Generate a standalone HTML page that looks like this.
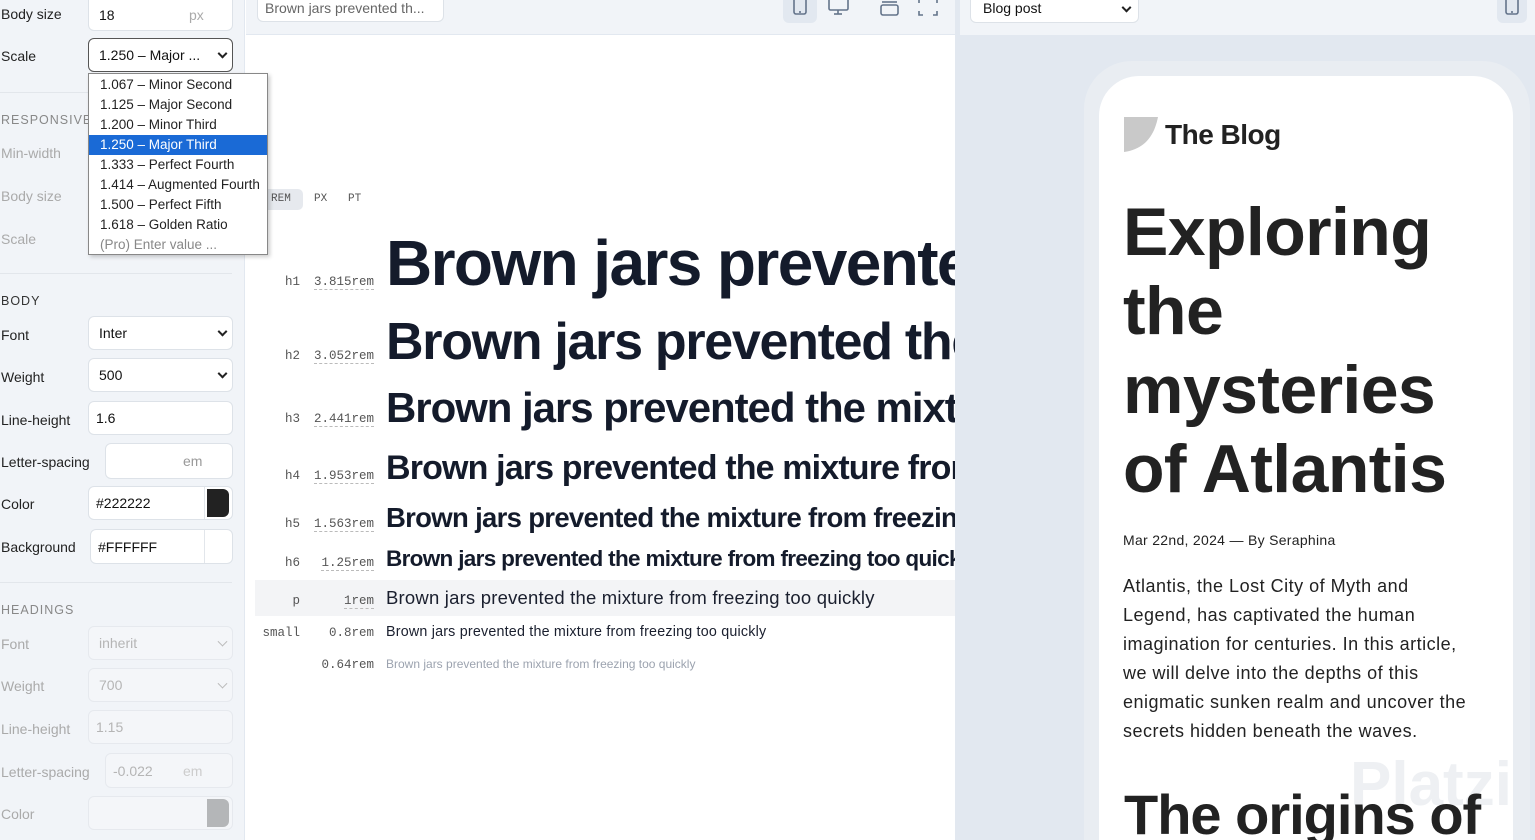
<!DOCTYPE html>
<html style="overflow:hidden;width:1535px;height:840px"><head><meta charset="utf-8"><style>
*{box-sizing:border-box;margin:0;padding:0}
body{width:1535px;height:840px;overflow:hidden;position:relative;font-family:"Liberation Sans",sans-serif;background:#fff;color:#1f2937}
.abs{position:absolute}
#side{left:0;top:0;width:245px;height:840px;background:#f1f4f8;border-right:1px solid #e2e8f0}
.lbl{position:absolute;left:1px;font-size:14px;color:#222}
.dim{color:#aaa}
.inp{position:absolute;background:#fff;border:1px solid #dde2e8;border-radius:6px;font-size:14px;padding-left:10px;display:flex;align-items:center;color:#111}
.inp.dis{background:#f4f6f9;color:#b5b5b5;border-color:#e6e9ee}
.chev{position:absolute;right:6px;top:50%;width:7px;height:7px;border-right:2px solid #222;border-bottom:2px solid #222;transform:translateY(-70%) rotate(45deg)}
.dis .chev{border-color:#bbb;border-width:1px}
.sec{position:absolute;left:1px;font-size:12.5px;letter-spacing:1px;color:#333}
.hr{position:absolute;left:0;width:232px;height:1px;background:#e2e6eb}
.mono{font-family:"Liberation Mono",monospace;font-size:12.5px;color:#555}
.row{position:absolute;left:255px;width:700px;display:flex;align-items:baseline;white-space:nowrap;overflow:hidden}
.tag{width:45px;text-align:right;flex-shrink:0}
.val{width:74px;text-align:right;margin-right:12px;flex-shrink:0}
.val span{border-bottom:1px dashed #bbb}
.s{font-weight:bold;color:#141b2b;letter-spacing:-0.025em}
</style></head><body>
<div id="side" class="abs">
 <div class="lbl" style="top:6px">Body size</div>
 <div class="inp" style="left:88px;top:0;width:145px;height:31px;border-top:none;border-radius:0 0 6px 6px">18<span style="position:absolute;left:100px;color:#aaa">px</span></div>
 <div class="lbl" style="top:48px">Scale</div>
 <div class="inp" style="left:88px;top:38px;width:145px;height:34px;border-color:#555">1.250 – Major ...<div class="chev"></div></div>
 <div class="hr" style="top:92px"></div>
 <div class="sec dim" style="top:113px;color:#888">RESPONSIVE</div>
 <div class="lbl dim" style="top:145px">Min-width</div>
 <div class="lbl dim" style="top:188px">Body size</div>
 <div class="lbl dim" style="top:231px">Scale</div>
 <div class="hr" style="top:273px"></div>
 <div class="sec" style="top:294px">BODY</div>
 <div class="lbl" style="top:327px">Font</div>
 <div class="inp" style="left:88px;top:316px;width:145px;height:34px">Inter<div class="chev"></div></div>
 <div class="lbl" style="top:369px">Weight</div>
 <div class="inp" style="left:88px;top:358px;width:145px;height:34px">500<div class="chev"></div></div>
 <div class="lbl" style="top:412px">Line-height</div>
 <div class="inp" style="left:88px;top:401px;width:145px;height:34px;padding-left:7px">1.6</div>
 <div class="lbl" style="top:454px">Letter-spacing</div>
 <div class="inp" style="left:105px;top:443px;width:128px;height:36px"><span style="position:absolute;left:77px;color:#999">em</span></div>
 <div class="lbl" style="top:496px">Color</div>
 <div class="inp" style="left:88px;top:486px;width:145px;height:34px;padding-left:7px">#222222<div style="position:absolute;left:115px;top:0;width:1px;height:32px;background:#e2e6eb"></div><div style="position:absolute;left:118px;top:2px;width:22px;height:28px;background:#222;border-radius:0 6px 6px 0"></div></div>
 <div class="lbl" style="top:539px">Background</div>
 <div class="inp" style="left:90px;top:529px;width:143px;height:35px;padding-left:7px">#FFFFFF<div style="position:absolute;left:113px;top:0;width:1px;height:33px;background:#e2e6eb"></div></div>
 <div class="hr" style="top:582px"></div>
 <div class="sec" style="top:603px;color:#888">HEADINGS</div>
 <div class="lbl dim" style="top:636px">Font</div>
 <div class="inp dis" style="left:88px;top:626px;width:145px;height:34px">inherit<div class="chev"></div></div>
 <div class="lbl dim" style="top:678px">Weight</div>
 <div class="inp dis" style="left:88px;top:668px;width:145px;height:34px">700<div class="chev"></div></div>
 <div class="lbl dim" style="top:721px">Line-height</div>
 <div class="inp dis" style="left:88px;top:710px;width:145px;height:34px;padding-left:7px">1.15</div>
 <div class="lbl dim" style="top:764px">Letter-spacing</div>
 <div class="inp dis" style="left:105px;top:753px;width:128px;height:35px;padding-left:7px">-0.022<span style="position:absolute;left:77px;color:#ccc">em</span></div>
 <div class="lbl dim" style="top:806px">Color</div>
 <div class="inp dis" style="left:88px;top:796px;width:145px;height:34px"><div style="position:absolute;left:118px;top:2px;width:22px;height:28px;background:#b4b6b8;border-radius:0 6px 6px 0"></div></div>
</div>
<!-- dropdown -->
<div class="abs" style="left:88px;top:73px;width:180px;height:182px;background:#fff;border:1px solid #888;box-shadow:2px 2px 4px rgba(0,0,0,.2);font-size:13.5px;color:#222;z-index:5">
 <div style="padding:1px 0 0 11px;line-height:20px">1.067 – Minor Second<br>1.125 – Major Second<br>1.200 – Minor Third</div>
 <div style="background:#1a6ad6;color:#fff;padding-left:11px;line-height:20px">1.250 – Major Third</div>
 <div style="padding-left:11px;line-height:20px">1.333 – Perfect Fourth<br>1.414 – Augmented Fourth<br>1.500 – Perfect Fifth<br>1.618 – Golden Ratio<br><span style="color:#888">(Pro) Enter value ...</span></div>
</div>
<!-- middle toolbar -->
<div class="abs" style="left:246px;top:0;width:709px;height:35px;background:#f1f4f8;border-bottom:1px solid #e2e8f0"></div>
<div class="abs" style="left:257px;top:-6px;width:187px;height:28px;background:#fff;border:1px solid #dde2e8;border-radius:6px;font-size:14px;color:#666;padding:5px 0 0 7px">Brown jars prevented th...</div>
<div class="abs" style="left:783px;top:0;width:34px;height:23px;background:#e2e8f0;border-radius:0 0 6px 6px"></div>
<svg class="abs" style="left:780px;top:0" width="170" height="20" fill="none" stroke="#64748b" stroke-width="1.6">
 <rect x="14" y="-4" width="12" height="18" rx="2"/><line x1="19" y1="12" x2="21" y2="12"/>
 <rect x="49" y="-4" width="19" height="14" rx="1.5"/><line x1="58" y1="10" x2="58" y2="14"/><line x1="54" y1="14" x2="62" y2="14"/>
 <rect x="101" y="5" width="17" height="10" rx="2"/><line x1="102" y1="2" x2="117" y2="2"/>
 <path d="M139 0v3M139 11v4h4M157 11v4h-4M157 0v3"/>
</svg>
<div class="abs" style="left:955px;top:0;width:5px;height:840px;background:#e2e8f0"></div>
<!-- unit tabs -->
<div class="abs mono" style="left:266px;top:189px;width:37px;height:21px;background:#e6e9ee;border-radius:0 5px 5px 0;font-size:11px;padding:4px 0 0 5px">REM</div>
<div class="abs mono" style="left:314px;top:193px;font-size:11px">PX</div>
<div class="abs mono" style="left:348px;top:193px;font-size:11px">PT</div>
<!-- rows -->
<div class="row" style="top:226px"><span class="mono tag">h1</span><span class="mono val"><span>3.815rem</span></span><span class="s" style="font-size:64px">Brown jars prevented the mixture</span></div>
<div class="row" style="top:312px"><span class="mono tag">h2</span><span class="mono val"><span>3.052rem</span></span><span class="s" style="font-size:52px">Brown jars prevented the mixture</span></div>
<div class="row" style="top:384px"><span class="mono tag">h3</span><span class="mono val"><span>2.441rem</span></span><span class="s" style="font-size:42px">Brown jars prevented the mixture</span></div>
<div class="row" style="top:449px"><span class="mono tag">h4</span><span class="mono val"><span>1.953rem</span></span><span class="s" style="font-size:34px">Brown jars prevented the mixture from</span></div>
<div class="row" style="top:502px"><span class="mono tag">h5</span><span class="mono val"><span>1.563rem</span></span><span class="s" style="font-size:27.5px">Brown jars prevented the mixture from freezing</span></div>
<div class="row" style="top:546px"><span class="mono tag">h6</span><span class="mono val"><span>1.25rem</span></span><span class="s" style="font-size:22.5px;letter-spacing:-0.03em">Brown jars prevented the mixture from freezing too quickly</span></div>
<div class="abs" style="left:255px;top:580px;width:700px;height:36px;background:#f3f4f6"></div>
<div class="row" style="top:587px"><span class="mono tag">p</span><span class="mono val"><span>1rem</span></span><span style="font-size:18.5px;color:#1a1f2e;letter-spacing:0.2px">Brown jars prevented the mixture from freezing too quickly</span></div>
<div class="row" style="top:624px"><span class="mono tag">small</span><span class="mono val"><span>0.8rem</span></span><span style="font-size:14.3px;color:#1a1f2e;letter-spacing:0.2px">Brown jars prevented the mixture from freezing too quickly</span></div>
<div class="row" style="top:657px"><span class="mono tag"></span><span class="mono val"><span>0.64rem</span></span><span style="font-size:12px;color:#9ca3af">Brown jars prevented the mixture from freezing too quickly</span></div>
<!-- right panel -->
<div class="abs" style="left:960px;top:0;width:575px;height:840px;background:#e2e8f0;overflow:hidden">
 <div class="abs" style="left:0;top:0;width:575px;height:35px;background:#f1f4f8"></div>
 <div class="abs" style="left:10px;top:-6px;width:169px;height:29px;background:#fff;border:1px solid #dde2e8;border-radius:6px;font-size:14px;color:#111;padding:5px 0 0 12px">Blog post<div class="chev" style="right:8px"></div></div>
 <div class="abs" style="left:537px;top:0;width:30px;height:23px;background:#e2e8f0;border-radius:0 0 6px 6px"></div>
 <svg class="abs" style="left:537px;top:0" width="30" height="20" fill="none" stroke="#64748b" stroke-width="1.6"><rect x="9" y="-4" width="12" height="18" rx="2"/><line x1="14" y1="12" x2="16" y2="12"/></svg>
 <div class="abs" style="left:124px;top:61px;width:446px;height:779px;background:#e9edf2;border-radius:48px 48px 0 0"></div>
 <div class="abs" style="left:139px;top:76px;width:414px;height:764px;background:#fff;border-radius:40px 40px 0 0"></div>
 <div class="abs" style="left:164px;top:117px;width:34px;height:35px;background:#c9c9c9;clip-path:path('M0 0H34C30 20 20 32 0 35Z')"></div>
 <div class="abs" style="left:205px;top:119px;font-size:28px;font-weight:bold;color:#222;letter-spacing:-0.5px">The Blog</div>
 <div class="abs" style="left:163px;top:193px;font-size:68px;line-height:79px;font-weight:bold;color:#222;letter-spacing:-0.6px">Exploring<br>the<br>mysteries<br>of Atlantis</div>
 <div class="abs" style="left:163px;top:532px;font-size:14px;color:#222;letter-spacing:0.3px">Mar 22nd, 2024 — By Seraphina</div>
 <div class="abs" style="left:163px;top:572px;width:350px;font-size:18px;line-height:29px;color:#222;letter-spacing:0.5px">Atlantis, the Lost City of Myth and Legend, has captivated the human imagination for centuries. In this article, we will delve into the depths of this enigmatic sunken realm and uncover the secrets hidden beneath the waves.</div>
 <div class="abs" style="left:390px;top:750px;height:60px;overflow:hidden;font-size:62px;line-height:70px;color:#eef0f3;font-weight:bold">Platzi</div>
 <div class="abs" style="left:164px;top:782px;width:380px;height:58px;overflow:hidden;font-size:56px;line-height:66px;font-weight:bold;color:#222;letter-spacing:-1px;white-space:nowrap">The origins of</div>
</div>
</body></html>
